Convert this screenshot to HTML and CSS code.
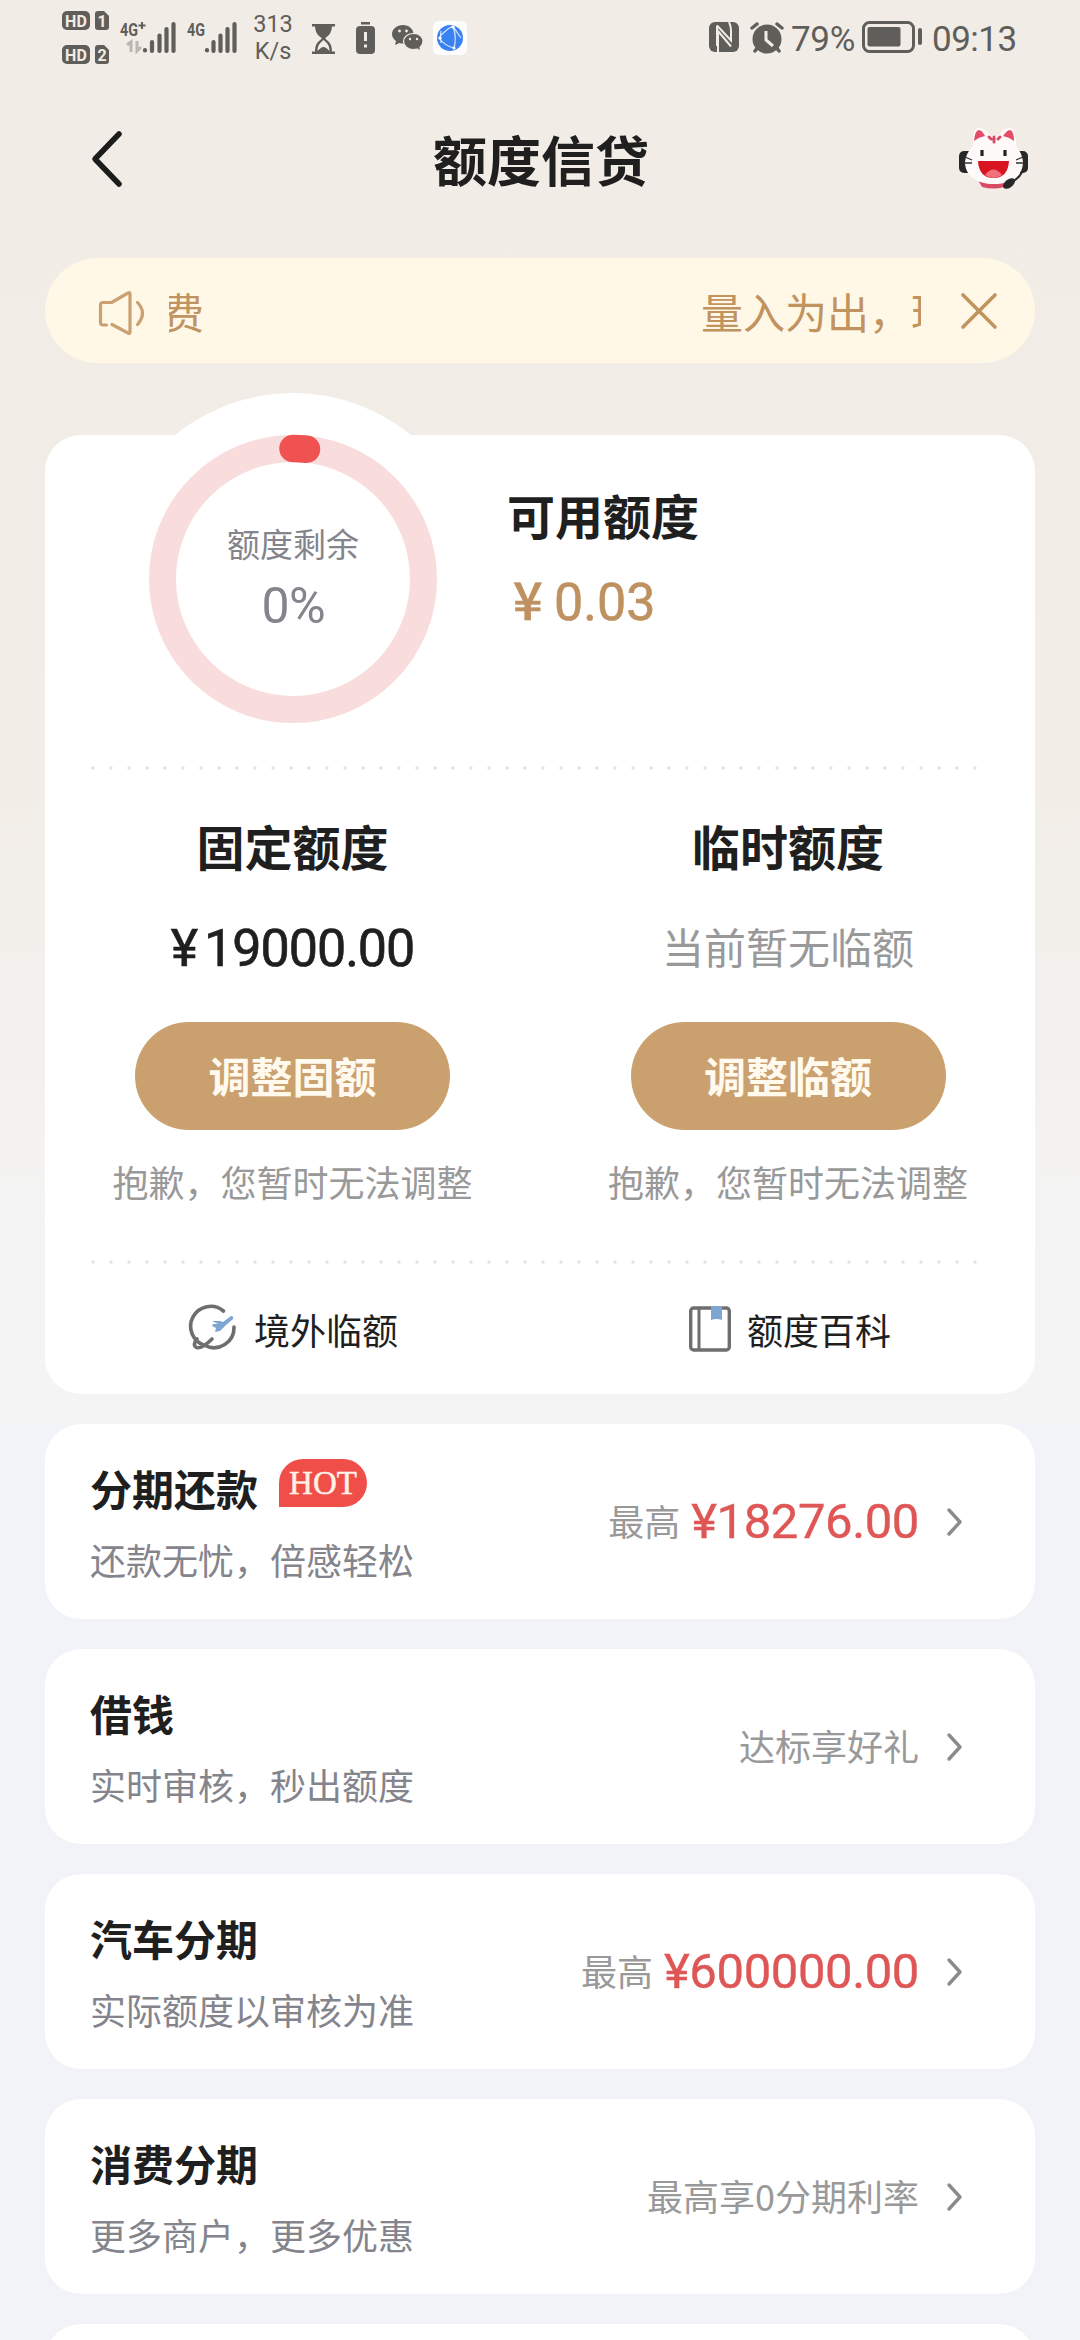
FILE: index.html
```html
<!DOCTYPE html>
<html lang="zh-CN">
<head>
<meta charset="utf-8">
<title>额度信贷</title>
<link rel="stylesheet" href="styles.css">
</head>
<body>
<div class="page">
  <header class="status">
    <svg class="sims" width="50" height="68" viewBox="0 0 50 68">
      <g fill="#605e5a">
        <rect x="1" y="0" width="28" height="19" rx="5"/><path d="M37 0h6l5 5v11q0 3-3 3h-8q-3 0-3-3V3q0-3 3-3z"/>
        <rect x="1" y="34" width="28" height="19" rx="5"/><path d="M37 34h6l5 5v11q0 3-3 3h-8q-3 0-3-3V37q0-3 3-3z"/>
      </g>
      <g class="sim-text"><text x="15" y="15.500" textLength="22">HD</text><text x="41" y="15.500">1</text><text x="15" y="49.500" textLength="22">HD</text><text x="41" y="49.500">2</text></g>
    </svg>
    <svg class="signal-a" width="58" height="34" viewBox="0 0 58 34">
      <text class="net" x="0" y="15" textLength="18" lengthAdjust="spacingAndGlyphs">4G</text>
      <path d="M22 1v7M18.500 4.500h7" stroke="#605e5a" stroke-width="2"/>
      <path d="M7 24l4-3v10M17 20v10l4-4" fill="none" stroke="#bab7b2" stroke-width="3"/>
      <path d="M25 29v.5M32 21v9M39.500 14.500v15.500M46.500 8v22M53.500 3v27" stroke="#605e5a" stroke-width="4.200" stroke-linecap="round"/>
    </svg>
    <svg class="signal-b" width="52" height="34" viewBox="0 0 52 34">
      <text class="net" x="0" y="15" textLength="18" lengthAdjust="spacingAndGlyphs">4G</text>
      <path d="M20 29v.5M26.500 21v9M33.500 14.500v15.500M40.500 8v22M47.500 3v27" stroke="#605e5a" stroke-width="4.200" stroke-linecap="round"/>
    </svg>
    <div class="speed"><span>313</span><span>K/s</span></div>
    <svg class="hourglass" width="24" height="32" viewBox="0 0 24 32">
      <path d="M0 1h23v2.500H0zM0 28.500h23v2.500H0z" fill="#605e5a"/>
      <path d="M3 2h17c0 7-2.500 10-6.500 13v1c4 3 6.500 5 6.500 13H3c0-8 2.500-10 6.500-13v-1C5.500 12 3 9 3 2z" fill="#605e5a"/>
      <path d="M5.500 28c0-6 2.500-8 6-11 3.500 3 6 5 6 11-2-2-4-4-6-4s-4 2-6 4z" fill="#f1ece6"/>
    </svg>
    <svg class="alert" width="19" height="33" viewBox="0 0 19 33">
      <rect x="5" y="0" width="9" height="2.500" fill="#605e5a"/><rect x="0" y="4" width="19" height="28" rx="4" fill="#605e5a"/>
      <path d="M9.500 10v9M9.500 22.500v3" stroke="#f1ece6" stroke-width="3"/>
    </svg>
    <svg class="wechat" width="32" height="28" viewBox="0 0 32 28">
      <path d="M11 1c6 0 10.500 4 10.500 9S17 19.500 11 19.500q-2 0-3.500-.5L3 21l1-4Q0 14 0 10C0 5 5 1 11 1z" fill="#605e5a"/>
      <path d="M21.500 9.500c6 0 9.500 3.500 9.500 8q0 3.500-3 6l1 3.500-4-2q-1.500.5-3.500.5c-5.500 0-10-3.500-10-8s4.500-8 10-8z" fill="#605e5a" stroke="#f1ece6" stroke-width="1.200"/>
      <g fill="#f1ece6"><circle cx="7.500" cy="7" r="1.400"/><circle cx="14.500" cy="7" r="1.400"/><circle cx="18" cy="15" r="1.200"/><circle cx="25" cy="15" r="1.200"/></g>
    </svg>
    <svg class="globe-app" width="34" height="34" viewBox="0 0 34 34">
      <rect width="34" height="34" rx="6" fill="#fdfdfd"/><circle cx="17" cy="17" r="13" fill="#3a82f0"/>
      <path d="M6 17Q12 9 20 5q4 12 1 22M6 17q6 8 15 10M20 5q5 8 8 12M8 10q-1 5 0 12" fill="none" stroke="#d8e9ff" stroke-width="1.200"/>
      <g fill="#fff"><circle cx="7" cy="17" r="1.600"/><circle cx="20" cy="6" r="1.600"/><circle cx="21" cy="27" r="1.600"/></g>
    </svg>
    <svg class="nfc" width="30" height="30" viewBox="0 0 30 30">
      <rect width="30" height="30" rx="6" fill="#605e5a"/>
      <path d="M9 30V9l13 15.500M8 3.500l14 15V9Q22 4 20 0M8 3.500V24" fill="none" stroke="#f1ece6" stroke-width="2"/>
    </svg>
    <svg class="alarm" width="34" height="32" viewBox="0 0 34 32">
      <circle cx="17" cy="17" r="14.500" fill="#605e5a"/>
      <path d="M2 6l5-4M32 6l-5-4M5 29l3-4M29 29l-3-4" stroke="#605e5a" stroke-width="3.500" stroke-linecap="round"/>
      <path d="M16 9v9l7 6" fill="none" stroke="#f1ece6" stroke-width="3"/>
    </svg>
    <span class="percent">79%</span>
    <svg class="battery" width="60" height="32" viewBox="0 0 60 32">
      <rect x="1.500" y="1.500" width="50" height="29" rx="6" fill="none" stroke="#605e5a" stroke-width="3"/>
      <rect x="5.500" y="6" width="33" height="19.500" rx="2" fill="#605e5a"/><rect x="56" y="7" width="4" height="17" rx="2" fill="#605e5a"/>
    </svg>
    <span class="clock">09:13</span>
  </header>

  <nav class="titlebar">
    <svg width="36" height="60" viewBox="0 0 36 60"><path d="M30 5L6 30l24 25" fill="none" stroke="#1c1c1c" stroke-width="5.500" stroke-linecap="round" stroke-linejoin="round"/></svg>
    <h1>额度信贷</h1>
    <svg class="mascot" width="72" height="66" viewBox="0 0 72 66">
      <rect x="1" y="25" width="14" height="22" rx="5" fill="#282828"/><rect x="57" y="25" width="13" height="22" rx="5" fill="#282828"/>
      <path d="M20 54h29l-3 7q-10 3-22 0z" fill="#d94a67"/>
      <path d="M15 20Q14 2 21 2q6 0 12 8h7Q47 1 52 2q6 1 6 18 6 7 7 16c0 14-12 22-29 22S7 50 7 36q1-9 8-16z" fill="#fffafa"/>
      <path d="M16 15Q17 4 21 4q3 0 6 6-6 1-11 5zM45 10q4-6 7-6 4 1 4 11-5-4-11-5z" fill="#e34d68"/>
      <path d="M31 11l2 2M36 11v5M42 11l-2 2" stroke="#d94a67" stroke-width="3" stroke-linecap="round"/>
      <path d="M24 24v6M47 24v6" stroke="#222" stroke-width="3.200"/>
      <path d="M20 35h31q-1 17-15.500 17T20 35z" fill="#d7141f"/><path d="M27 49q8.500-11 17 0-8.500 6-17 0z" fill="#f2707c"/>
      <path d="M7 31l7 3M6 37h8M65 31l-7 3M66 37h-8" stroke="#333" stroke-width="1.300"/>
      <path d="M64 46q-3 7-14 12" stroke="#282828" stroke-width="2" fill="none"/><ellipse cx="51" cy="57.500" rx="7" ry="4" transform="rotate(-38 51 57.500)" fill="#282828"/>
    </svg>
  </nav>

  <section class="notice">
    <svg width="48" height="48" viewBox="0 0 48 48"><path d="M9.500 38H6q-2.500 0-2.500-2.500V18q0-2.500 2.500-2.500h8.500L31 6q2-1 2 1v38q0 2-2 1L15 37.500M40.500 15.500q10 10.500 0 22" fill="none" stroke="#cba171" stroke-width="3.200" stroke-linejoin="round" stroke-linecap="round"/></svg>
    <div class="marquee"><span>费</span><span>量入为出，理性消费</span></div>
    <svg class="close" width="36" height="36" viewBox="0 0 36 36"><path d="M2 2l32 32M34 2L2 34" stroke="#c0935f" stroke-width="3.600" stroke-linecap="round"/></svg>
  </section>

  <main class="summary">
    <section class="available">
      <svg class="gauge" width="372" height="372" viewBox="0 0 372 372">
        <circle cx="186" cy="186" r="186" fill="#fff"/>
        <circle cx="186" cy="186" r="130.500" fill="none" stroke="#f9dcdc" stroke-width="27"/>
        <path d="M186 55.500A130.500 130.500 0 0 1 199.500 56.200" fill="none" stroke="#f05151" stroke-width="27.500" stroke-linecap="round"/>
        <text class="gauge-label" x="186" y="164">额度剩余</text>
        <text class="gauge-value" x="186.500" y="230" textLength="64">0%</text>
      </svg>
      <div class="available-info"><h2>可用额度</h2><p><span class="yen">¥</span>0.03</p></div>
    </section>
    <div class="dots"></div>
    <section class="limits">
      <div class="limit"><h2>固定额度</h2><p class="fixed"><span>¥</span>19000.00</p><button>调整固额</button><small>抱歉，您暂时无法调整</small></div>
      <div class="limit"><h2>临时额度</h2><p class="none">当前暂无临额</p><button>调整临额</button><small>抱歉，您暂时无法调整</small></div>
    </section>
    <div class="dots"></div>
    <section class="links">
      <a><svg width="46" height="46" viewBox="0 0 46 46"><path d="M31.500 5A20 20 0 1 0 13 39.500M42 21A20 20 0 0 1 13 39.500M20 33Q10 43 4.500 41.500 0 39 5 33" fill="none" stroke="#6e6e6e" stroke-width="3.600" stroke-linecap="round"/><path d="M20 15h8l3 1 8-6q3 0 2 3l-8 7-5 5-5 1 1-4-4-2 1-2h5z" fill="#7fa5d3"/></svg><span>境外临额</span></a>
      <a><svg width="42" height="46" viewBox="0 0 42 46"><rect x="1.700" y="2" width="38.600" height="42" rx="3" fill="none" stroke="#6e6e6e" stroke-width="3.400"/><path d="M10 2v42" stroke="#6e6e6e" stroke-width="3"/><path d="M22 0h11v14q-5.500-2-11 0z" fill="#7fa5d3"/></svg><span>额度百科</span></a>
    </section>
  </main>

  <section class="offers">
    <article class="offer"><div><h3>分期还款<em>HOT</em></h3><p>还款无忧，倍感轻松</p></div><div class="value"><span>最高</span><b>¥18276.00</b></div><svg width="16" height="28" viewBox="0 0 16 28"><path d="M2 2l11 12L2 26" /></svg></article>
    <article class="offer"><div><h3>借钱</h3><p>实时审核，秒出额度</p></div><div class="value"><span>达标享好礼</span></div><svg width="16" height="28" viewBox="0 0 16 28"><path d="M2 2l11 12L2 26" /></svg></article>
    <article class="offer"><div><h3>汽车分期</h3><p>实际额度以审核为准</p></div><div class="value"><span>最高</span><b>¥600000.00</b></div><svg width="16" height="28" viewBox="0 0 16 28"><path d="M2 2l11 12L2 26" /></svg></article>
    <article class="offer"><div><h3>消费分期</h3><p>更多商户，更多优惠</p></div><div class="value"><span>最高享0分期利率</span></div><svg width="16" height="28" viewBox="0 0 16 28"><path d="M2 2l11 12L2 26" /></svg></article>
    <article class="offer"></article>
  </section>
</div>
</body>
</html>
```
FILE: styles.css
```css
* { box-sizing: border-box; margin: 0; padding: 0; }
body { font-family: "Noto Sans CJK SC", sans-serif; color: #1f1f1f; background: #f2f3f8; }
svg { display: block; flex: none; overflow: visible; }
.page {
  width: 1080px; height: 2340px; overflow: hidden;
  background: linear-gradient(#f1ece6 0, #f2ede6 750px, #f3f0ed 980px, #f4f4f4 1250px, #f4f4f4 1423px, #f2f3f8 1423px);
}

.status { display: flex; align-items: flex-start; height: 100px; padding: 11px 0 0 61px; color: #605e5a; font-family: Roboto, sans-serif; }
.sim-text { font: bold 16px Roboto, sans-serif; fill: #f1ece6; text-anchor: middle; }
.net { font: bold 19px Roboto, sans-serif; fill: #605e5a; }
.signal-a { margin: 10px 0 0 9px; }
.signal-b { margin: 10px 0 0 9px; }
.speed { display: flex; flex-direction: column; width: 42px; margin: 0 0 0 13px; font-size: 23.500px; line-height: 27px; text-align: center; }
.hourglass { margin: 12px 0 0 18px; }
.alert { margin: 11px 0 0 20px; }
.wechat { margin: 13px 0 0 17px; }
.globe-app { margin: 10px 0 0 9px; }
.nfc { margin: 11px 0 0 242px; }
.alarm { margin: 11px 0 0 11px; }
.percent { margin: 8px 0 0 7px; width: 69px; font-size: 35px; line-height: 41px; letter-spacing: -.3px; }
.battery { margin: 10px 0 0 2px; }
.clock { margin: 8px 0 0 10px; font-size: 35px; line-height: 41px; letter-spacing: -.5px; }

.titlebar { display: flex; align-items: center; justify-content: space-between; height: 118px; padding: 0 50px 0 89px; }
.titlebar h1 { font-size: 54px; font-weight: 700; line-height: 80px; margin: -1px 1px 0 0; }
.mascot { margin-top: -1px; }

.notice { display: flex; align-items: center; width: 990px; height: 105px; margin: 40px 45px 0; padding: 0 38px 0 52px; border-radius: 53px; background: #fff8e7; color: #c0935f; }
.marquee { display: flex; flex: none; width: 752px; margin-left: 24px; overflow: hidden; font-size: 42px; line-height: 60px; white-space: nowrap; }
.marquee span:first-child { margin: 0 497px 0 -7px; }
.close { margin-left: auto; }

.summary { width: 990px; height: 959px; margin: 72px 45px 0; border-radius: 36px; background: #fff; }
.available { display: flex; height: 331px; padding-left: 62px; }
.gauge { margin-top: -42px; }
.gauge-label { font-size: 33px; fill: #84848c; text-anchor: middle; }
.gauge-value { font: 50px Roboto, sans-serif; fill: #84848c; text-anchor: middle; }
.available-info { margin: 44px 0 0 28px; }
h2 { font-size: 48px; line-height: 70px; font-weight: 700; }
.available-info p { font: 400 52px/70px Roboto, sans-serif; color: #bf9160; margin-top: 14px; -webkit-text-stroke: .6px; }
.yen { display: inline-block; width: 41px; margin-left: 6px; font-family: "Noto Sans CJK SC", sans-serif; font-size: 52px; font-weight: 500; }
.dots { width: 888px; height: 4px; margin-left: 46px; background: radial-gradient(circle at 2px 2px, #e4e4e4 1.300px, transparent 2px) 0 0 / 18px 4px repeat-x; }
.limits { display: flex; height: 490px; }
.limit { display: flex; flex-direction: column; align-items: center; width: 50%; padding: 40px 0 0 1px; }
.limit:first-child { padding-left: 0; }
.limit p { height: 70px; margin-top: 31px; line-height: 70px; }
.limit .fixed { font: 400 52px/76px Roboto, sans-serif; letter-spacing: -1px; -webkit-text-stroke: .7px; }
.fixed span { margin-right: 7px; }
.none { font-size: 42px; color: #999; }
button { width: 315px; height: 108px; margin-top: 41px; padding-bottom: 3px; border: 0; border-radius: 54px; background: #cba06f; color: #fffaed; font: bold 42px "Noto Sans CJK SC", sans-serif; }
small { margin-top: 25px; font-size: 36px; line-height: 52px; color: #999; }
.links { display: flex; height: 130px; }
.links a { display: flex; align-items: center; justify-content: center; width: 50%; gap: 16px; font-size: 36px; }
.links svg { margin-left: 5px; }

.offers { display: flex; flex-direction: column; gap: 30px; padding: 30px 45px 0; }
.offer { display: flex; flex: none; align-items: center; height: 195px; padding: 0 72px 0 45px; border-radius: 36px; background: #fff; }
.offer h3 { display: flex; height: 66px; font-size: 42px; line-height: 65px; font-weight: 700; }
.offer em { width: 88px; height: 48px; margin: 4px 0 0 21px; border-radius: 24px 24px 24px 0; background: #f04f49; color: #fff1e8; font: 33px/49px "Liberation Serif", serif; -webkit-text-stroke: .5px; text-align: center; }
.offer p { margin-top: 8px; font-size: 36px; line-height: 60px; color: #84848c; }
.value { display: flex; align-items: center; margin-left: auto; font-size: 36px; color: #999; }
.value span { padding-bottom: 4px; }
.value b { margin-left: 11px; font: 400 49px Roboto, sans-serif; letter-spacing: -.4px; color: #df5656; -webkit-text-stroke: .4px; }
.offer > svg { margin-left: 28px; fill: none; stroke: #8b8b8b; stroke-width: 3.400; stroke-linecap: round; stroke-linejoin: round; }
```
